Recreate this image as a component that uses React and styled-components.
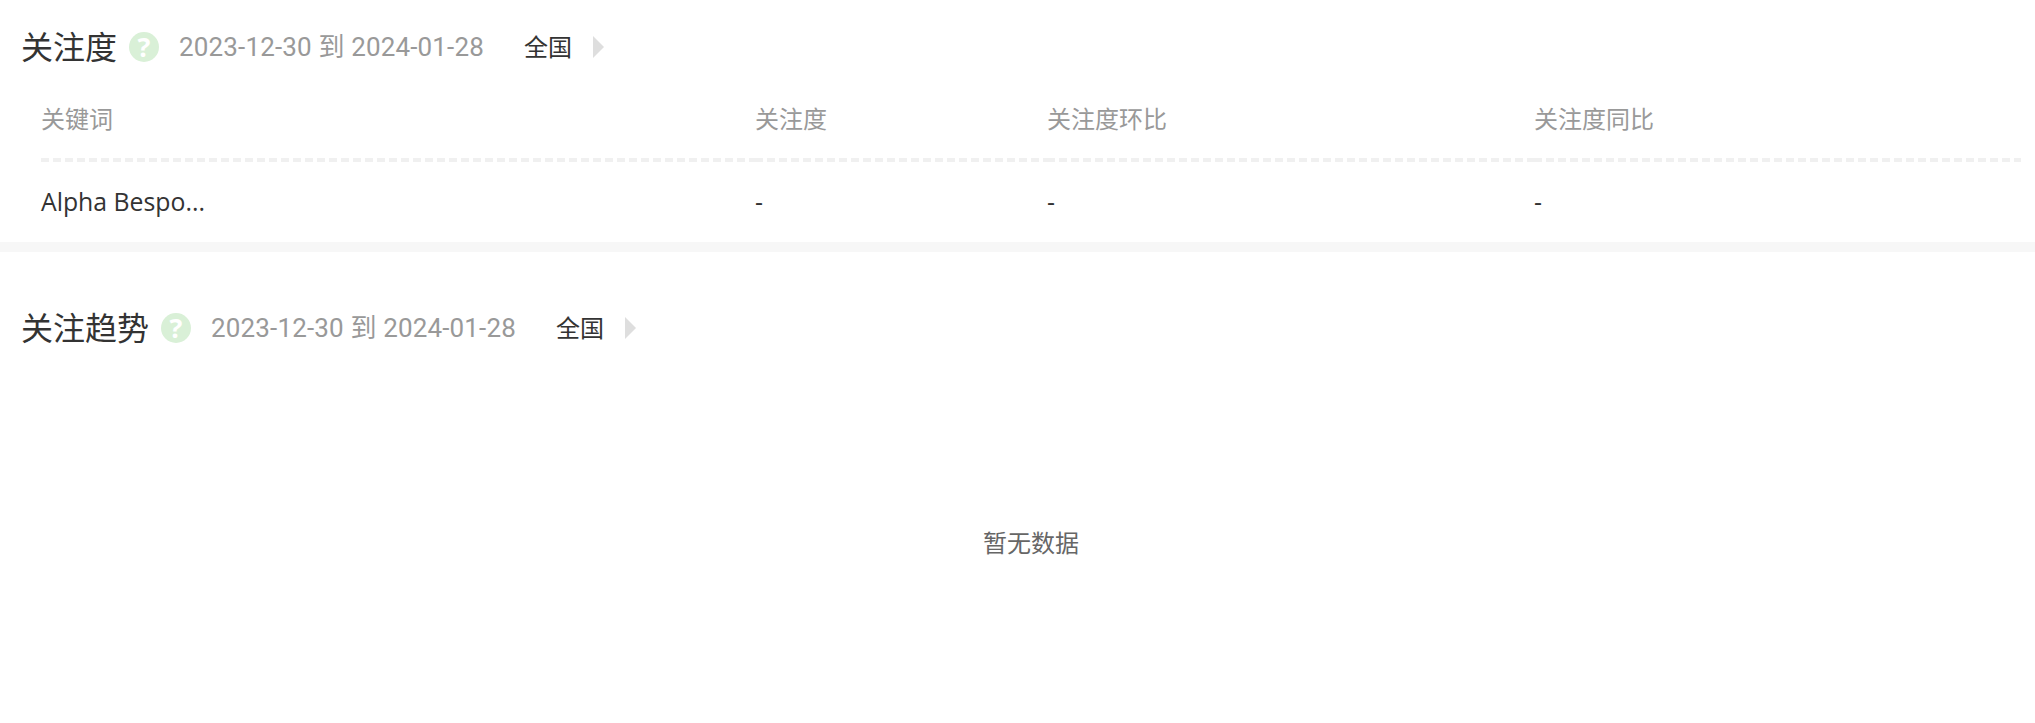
import React from 'react'
import styled, { createGlobalStyle } from 'styled-components'

const GlobalStyle = createGlobalStyle`
  html, body {
    margin: 0;
    padding: 0;
    background: #fff;
    font-family: "Open Sans", "Noto Sans CJK SC", sans-serif;
  }
`

const Page = styled.div`
  width: 2035px;
  height: 723px;
  overflow: hidden;
  background: #fff;
`

const Section = styled.section`
  padding: ${(p) => p.$top}px 14px 0 21px;
`

const Band = styled.div`
  height: 10px;
  background: #f7f7f7;
`

const Header = styled.div`
  display: flex;
  align-items: center;
  height: 36px;
`

const Title = styled.h2`
  margin: 0;
  font-size: 32px;
  font-weight: 400;
  line-height: 36px;
  color: #333;
`

const HelpBadge = styled.span`
  flex: none;
  width: 30px;
  height: 30px;
  margin-left: 12px;
  border-radius: 50%;
  background: #d9f0d7;
  color: #fff;
  font-size: 27px;
  font-weight: 700;
  line-height: 30px;
  text-align: center;
`

const DateRange = styled.span`
  margin-left: 20px;
  font-family: Roboto, "Noto Sans CJK SC", sans-serif;
  font-size: 26px;
  letter-spacing: 0.15px;
  line-height: 36px;
  color: #999;
  white-space: nowrap;
`

const Region = styled.span`
  margin-left: 40px;
  font-size: 24px;
  line-height: 36px;
  color: #333;
`

const Arrow = styled.span`
  width: 0;
  height: 0;
  margin-left: 21px;
  border-style: solid;
  border-width: 11px 0 11px 11px;
  border-color: transparent transparent transparent #dedede;
`

const Table = styled.div`
  margin-left: 20px;
`

const Row = styled.div`
  display: grid;
  grid-template-columns: 714px 292px 487px 487px;
`

const HeadCell = styled.div`
  display: flex;
  align-items: center;
  height: 80px;
  padding: 12px 0 5px;
  font-size: 24px;
  color: #999;
  background: repeating-linear-gradient(to right, #f0f0f0 0 8px, transparent 8px 12px) left bottom / 100% 4px no-repeat;
`

const Cell = styled.div`
  display: flex;
  align-items: center;
  height: 78px;
  padding-bottom: 2px;
  font-size: 24.8px;
  color: #333;
`

const Empty = styled.div`
  display: flex;
  align-items: center;
  justify-content: center;
  height: 391px;
  margin-left: 20px;
  font-size: 24px;
  color: #666;
`

function SectionHeader({ title }) {
  return (
    <Header>
      <Title>{title}</Title>
      <HelpBadge>?</HelpBadge>
      <DateRange>2023-12-30 到 2024-01-28</DateRange>
      <Region>全国</Region>
      <Arrow />
    </Header>
  )
}

export default function App() {
  return (
    <Page>
      <GlobalStyle />
      <Section $top={29}>
        <SectionHeader title="关注度" />
        <Table>
          <Row>
            <HeadCell>关键词</HeadCell>
            <HeadCell>关注度</HeadCell>
            <HeadCell>关注度环比</HeadCell>
            <HeadCell>关注度同比</HeadCell>
          </Row>
          <Row>
            <Cell>Alpha Bespo...</Cell>
            <Cell>-</Cell>
            <Cell>-</Cell>
            <Cell>-</Cell>
          </Row>
        </Table>
      </Section>
      <Band />
      <Section $top={58}>
        <SectionHeader title="关注趋势" />
        <Empty>暂无数据</Empty>
      </Section>
    </Page>
  )
}
